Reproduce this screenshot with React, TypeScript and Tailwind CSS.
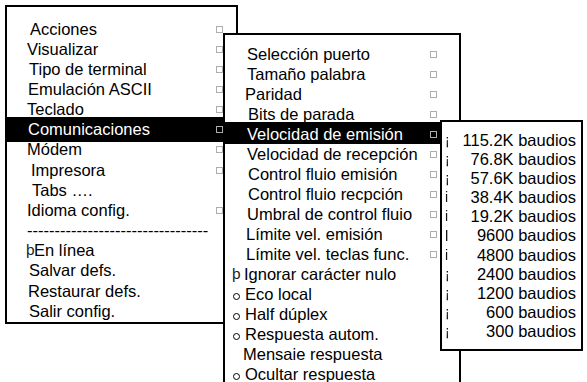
type Item = {
  text: string;
  pad: string;
  box?: boolean;
  mark?: "thorn" | "circle";
  active?: boolean;
};

const mainMenu: Item[] = [
  { text: "Acciones", pad: "pl-[23px]", box: true },
  { text: "Visualizar", pad: "pl-[20px]", box: true },
  { text: "Tipo de terminal", pad: "pl-[22px]", box: true },
  { text: "Emulación ASCII", pad: "pl-[21px]", box: true },
  { text: "Teclado", pad: "pl-[20px]", box: true },
  { text: "Comunicaciones", pad: "pl-[21px]", box: true, active: true },
  { text: "Módem", pad: "pl-[20px]", box: true },
  { text: "Impresora", pad: "pl-[24px]", box: true },
  { text: "Tabs ….", pad: "pl-[25px]" },
  { text: "Idioma config.", pad: "pl-[20px]", box: true },
  { text: "---------------------------------", pad: "pl-[20px]" },
  { text: "En línea", pad: "pl-[19px]", mark: "thorn" },
  { text: "Salvar defs.", pad: "pl-[22px]" },
  { text: "Restaurar defs.", pad: "pl-[21px]" },
  { text: "Salir config.", pad: "pl-[22px]" },
];

const commMenu: Item[] = [
  { text: "Selección puerto", pad: "pl-[22px]", box: true },
  { text: "Tamaño palabra", pad: "pl-[22px]", box: true },
  { text: "Paridad", pad: "pl-[20px]", box: true },
  { text: "Bits de parada", pad: "pl-[23px]", box: true },
  { text: "Velocidad de emisión", pad: "pl-[22px]", box: true, active: true },
  { text: "Velocidad de recepción", pad: "pl-[22px]", box: true },
  { text: "Control fluio emisión", pad: "pl-[23px]", box: true },
  { text: "Control fluio recpción", pad: "pl-[23px]", box: true },
  { text: "Umbral de control fluio", pad: "pl-[22px]", box: true },
  { text: "Límite vel. emisión", pad: "pl-[21px]", box: true },
  { text: "Límite vel. teclas func.", pad: "pl-[21px]", box: true },
  { text: "Ignorar carácter nulo", pad: "pl-[6px]", mark: "thorn" },
  { text: "Eco local", pad: "pl-[6px]", mark: "circle" },
  { text: "Half dúplex", pad: "pl-[6px]", mark: "circle" },
  { text: "Respuesta autom.", pad: "pl-[6px]", mark: "circle" },
  { text: "Mensaie respuesta", pad: "pl-[18px]" },
  { text: "Ocultar respuesta", pad: "pl-[6px]", mark: "circle" },
];

const speeds = [
  { mark: "¡", text: "115.2K baudios" },
  { mark: "¡", text: "76.8K baudios" },
  { mark: "¡", text: "57.6K baudios" },
  { mark: "i", text: "38.4K baudios" },
  { mark: "i", text: "19.2K baudios" },
  { mark: "l", text: "9600 baudios" },
  { mark: "i", text: "4800 baudios" },
  { mark: "¡", text: "2400 baudios" },
  { mark: "¡", text: "1200 baudios" },
  { mark: "¡", text: "600 baudios" },
  { mark: "¡", text: "300 baudios" },
];

const Box = ({ right }: { right: string }) => (
  <span className={`ml-auto mt-[7px] h-[7px] w-[7px] shrink-0 border border-[#adadad] ${right}`} />
);

const MainRow = ({ item }: { item: Item }) => (
  <div
    className={`flex items-start whitespace-nowrap ${item.pad} ${
      item.active
        ? "-mb-[3px] -mt-[2px] h-[25.17px] bg-black pb-[3px] pt-[2px] text-white leading-[20.17px]"
        : "h-[20.17px] leading-[20.17px]"
    }`}
  >
    {item.mark === "thorn" && <span className="w-[7px] text-[15.5px] text-[#222]">þ</span>}
    <span className={item.mark === "thorn" ? "ml-[1px]" : ""}>{item.text}</span>
    {item.box && <Box right="mr-[13px]" />}
  </div>
);

const CommRow = ({ item }: { item: Item }) => (
  <div
    className={`flex items-start whitespace-nowrap ${item.pad} ${
      item.active
        ? "-mt-[2px] h-[22.04px] bg-black pt-[2px] text-white leading-[20.04px]"
        : "h-[20.04px] leading-[20.04px]"
    }`}
  >
    {item.mark === "thorn" && <span className="ml-[1px] w-[12px] text-[15.5px] text-[#222]">þ</span>}
    {item.mark === "circle" && (
      <span className="mr-[5px] ml-[2px] mt-[9px] h-[7px] w-[7px] shrink-0 rounded-full border border-black" />
    )}
    <span>{item.text}</span>
    {item.box && <Box right="mr-[22px]" />}
  </div>
);

export default function App() {
  return (
    <div className="relative h-[382px] w-[587px] overflow-hidden bg-white text-[16.5px] text-black [font-family:'Liberation_Sans',Arial,sans-serif]">
      <div className="absolute left-[5px] top-[5px] flex h-[319px] w-[233px] flex-col border-2 border-black bg-white pt-[11.5px]">
        {mainMenu.map((item) => (
          <MainRow key={item.text} item={item} />
        ))}
      </div>

      <div className="absolute left-[223px] top-[33px] flex h-[400px] w-[238px] flex-col border-2 border-black bg-white pt-[8.5px]">
        {commMenu.map((item) => (
          <CommRow key={item.text} item={item} />
        ))}
      </div>

      <div className="absolute left-[440px] top-[120px] flex h-[231px] w-[143px] flex-col border-2 border-black bg-white pt-[8.7px]">
        {speeds.map((s) => (
          <div key={s.text} className="flex h-[19.15px] items-start whitespace-nowrap leading-[19.15px]">
            <span
              className={`ml-[3px] w-[10px] text-[#111] [transform:translateZ(0)] ${
                s.mark === "l" ? "text-[15px]" : "text-[14px]"
              }`}
            >
              {s.mark}
            </span>
            <span className="flex-1 pr-[5px] text-right">{s.text}</span>
          </div>
        ))}
      </div>
    </div>
  );
}
